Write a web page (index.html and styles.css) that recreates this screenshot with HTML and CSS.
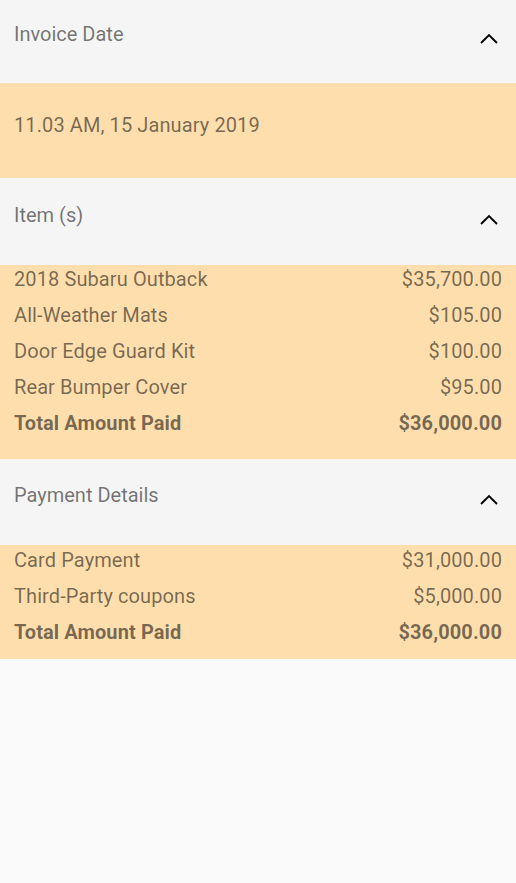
FILE: index.html
```html
<!DOCTYPE html>
<html>
<head>
<meta charset="utf-8">
<link rel="stylesheet" href="styles.css">
</head>
<body>
<div class="page">
  <section class="panel">
    <div class="panel-head head-first">
      <span class="panel-title">Invoice Date</span>
      <svg class="chev" viewBox="0 0 18 11"><polyline points="1,10 9,2 17,10"/></svg>
    </div>
    <div class="panel-body date-body">
      <div class="date">11.03 AM, 15 January 2019</div>
    </div>
  </section>
  <section class="panel">
    <div class="panel-head">
      <span class="panel-title">Item (s)</span>
      <svg class="chev" viewBox="0 0 18 11"><polyline points="1,10 9,2 17,10"/></svg>
    </div>
    <div class="panel-body list-body items">
      <div class="row"><span>2018 Subaru Outback</span><span>$35,700.00</span></div>
      <div class="row"><span>All-Weather Mats</span><span>$105.00</span></div>
      <div class="row"><span>Door Edge Guard Kit</span><span>$100.00</span></div>
      <div class="row"><span>Rear Bumper Cover</span><span>$95.00</span></div>
      <div class="row total"><span>Total Amount Paid</span><span>$36,000.00</span></div>
    </div>
  </section>
  <section class="panel">
    <div class="panel-head head-last">
      <span class="panel-title">Payment Details</span>
      <svg class="chev" viewBox="0 0 18 11"><polyline points="1,10 9,2 17,10"/></svg>
    </div>
    <div class="panel-body list-body payments">
      <div class="row"><span>Card Payment</span><span>$31,000.00</span></div>
      <div class="row"><span>Third-Party coupons</span><span>$5,000.00</span></div>
      <div class="row total"><span>Total Amount Paid</span><span>$36,000.00</span></div>
    </div>
  </section>
</div>
</body>
</html>
```

FILE: styles.css
```css
html, body {
  margin: 0;
  padding: 0;
  background: #fafafa;
  font-family: Roboto, "Noto Sans", sans-serif;
}
.page {
  width: 516px;
  min-height: 883px;
  background: #fafafa;
}
.panel-head {
  height: 87px;
  background: #f5f5f5;
  display: flex;
  justify-content: space-between;
  align-items: flex-start;
  padding: 25px 18px 0 14px;
  box-sizing: border-box;
}
.head-first {
  height: 83px;
  padding-top: 22px;
}
.head-last {
  height: 86px;
  padding-top: 24px;
}
.panel-title {
  font-size: 20px;
  line-height: 24px;
  color: rgba(0, 0, 0, 0.54);
}
.chev {
  width: 18px;
  height: 11px;
  margin-top: 11px;
  fill: none;
  stroke: #000;
  stroke-width: 1.9;
}
.panel-body {
  background: #ffdead;
  color: rgba(0, 0, 0, 0.54);
  font-size: 20px;
  letter-spacing: 0.1px;
}
.date-body {
  height: 95px;
  padding: 30px 14px 0;
  box-sizing: border-box;
  line-height: 24px;
}
.list-body {
  display: flex;
  flex-direction: column;
  gap: 8px;
  padding: 0 14px;
}
.items {
  padding-bottom: 22px;
}
.payments {
  padding-top: 1px;
  padding-bottom: 13px;
}
.row {
  display: flex;
  justify-content: space-between;
  line-height: 28px;
  height: 28px;
}
.total {
  font-weight: bold;
}
```
